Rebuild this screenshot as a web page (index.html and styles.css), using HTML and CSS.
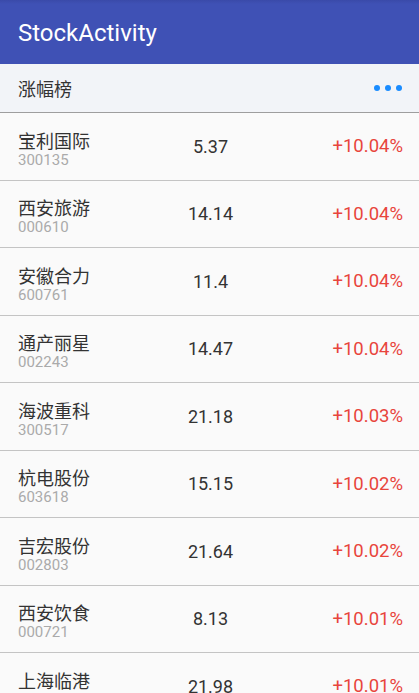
FILE: index.html
```html
<!DOCTYPE html>
<html lang="zh">
<head>
<meta charset="utf-8">
<title>StockActivity</title>
<link rel="stylesheet" href="styles.css">
</head>
<body>
<header class="appbar"><h1 class="appbar-title">StockActivity</h1></header>
<div class="section-head">
  <span class="section-title">涨幅榜</span>
  <span class="more" aria-label="more"><i></i><i></i><i></i></span>
</div>
<ul class="list">
  <li class="row"><div class="name-col"><span class="name">宝利国际</span><span class="code">300135</span></div><div class="price">5.37</div><div class="pct">+10.04%</div></li>
  <li class="row"><div class="name-col"><span class="name">西安旅游</span><span class="code">000610</span></div><div class="price">14.14</div><div class="pct">+10.04%</div></li>
  <li class="row"><div class="name-col"><span class="name">安徽合力</span><span class="code">600761</span></div><div class="price">11.4</div><div class="pct">+10.04%</div></li>
  <li class="row"><div class="name-col"><span class="name">通产丽星</span><span class="code">002243</span></div><div class="price">14.47</div><div class="pct">+10.04%</div></li>
  <li class="row"><div class="name-col"><span class="name">海波重科</span><span class="code">300517</span></div><div class="price">21.18</div><div class="pct">+10.03%</div></li>
  <li class="row"><div class="name-col"><span class="name">杭电股份</span><span class="code">603618</span></div><div class="price">15.15</div><div class="pct">+10.02%</div></li>
  <li class="row"><div class="name-col"><span class="name">吉宏股份</span><span class="code">002803</span></div><div class="price">21.64</div><div class="pct">+10.02%</div></li>
  <li class="row"><div class="name-col"><span class="name">西安饮食</span><span class="code">000721</span></div><div class="price">8.13</div><div class="pct">+10.01%</div></li>
  <li class="row"><div class="name-col"><span class="name">上海临港</span><span class="code">600848</span></div><div class="price">21.98</div><div class="pct">+10.01%</div></li>
</ul>
</body>
</html>
```
FILE: styles.css
```css
html, body {
  margin: 0;
  padding: 0;
  height: 693px;
  overflow: hidden;
  background: #fafafa;
  font-family: Roboto, "Noto Sans CJK SC", sans-serif;
}
.appbar {
  height: 64px;
  background: linear-gradient(#3a4aa9 0, #3f51b5 4px, #3f51b5 100%);
  display: flex;
  align-items: center;
  padding: 0 18px;
  box-sizing: border-box;
}
.appbar-title {
  margin: 0;
  color: #fff;
  font-weight: 400;
  font-size: 24px;
  line-height: 1;
  padding-top: 1px;
}
.section-head {
  height: 48px;
  background: #f2f4f8;
  border-bottom: 1px solid #9e9e9e;
  display: flex;
  align-items: center;
  justify-content: space-between;
  padding: 0 17px 0 18px;
}
.section-title {
  font-size: 18px;
  color: #333;
}
.more {
  display: flex;
  gap: 5px;
}
.more i {
  width: 6px;
  height: 6px;
  border-radius: 50%;
  background: #1a8cff;
}
.list {
  list-style: none;
  margin: 0;
  padding: 0;
}
.row {
  height: 66.5px;
  border-bottom: 1px solid #c4c4c4;
  display: flex;
  align-items: center;
  padding: 0 16px 0 18px;
}
.row > div {
  flex: 1 1 0;
}
.name-col {
  display: flex;
  flex-direction: column;
  padding-top: 6px;
}
.name {
  font-size: 18px;
  line-height: 21px;
  color: #333;
}
.code {
  font-size: 15px;
  line-height: 16px;
  color: #aaa;
}
.price {
  text-align: center;
  font-size: 18px;
  color: #333;
}
.pct {
  text-align: right;
  font-size: 18.5px;
  color: #e8453c;
}
```
